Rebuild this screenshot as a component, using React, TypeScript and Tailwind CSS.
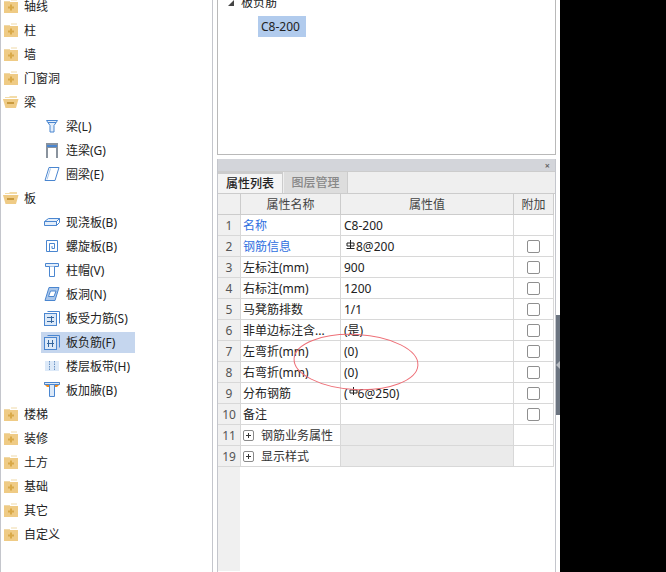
const FONT = "font-['Noto_Sans','Noto_Sans_CJK_SC',sans-serif]";

function Folder({ open }: { open?: boolean }) {
  if (open) {
    return (
      <svg width="16" height="14" viewBox="0 0 16 14" className="ml-[2px] shrink-0">
        <path d="M2 2h4l1-1h7v2H2z" fill="#f3dca8" />
        <path d="M0 4h15.500l-2.500 9H2.500z" fill="#efcb85" />
        <rect x="4" y="7" width="7" height="2" fill="#c99a3e" />
      </svg>
    );
  }
  return (
    <svg width="14" height="14" viewBox="0 0 14 14" className="ml-[3px] shrink-0">
      <rect x="7" y="0.500" width="6" height="1" fill="#f0d9a8" />
      <rect x="0" y="3" width="14" height="11" fill="#efcb85" />
      <rect x="0" y="2" width="6" height="1" fill="#f0d9a8" />
      <path d="M6 5.500h2v2h2v2H8v2H6v-2H4v-2h2z" fill="#d9a948" />
    </svg>
  );
}

const BLUE = "#4a86d0";

function BeamIcon({ name }: { name: string }) {
  const common = { width: 16, height: 16, viewBox: "0 0 16 16", fill: "none", stroke: BLUE, className: "shrink-0" };
  switch (name) {
    case "funnel":
      return (
        <svg {...common}>
          <path d="M2.500 2.500h11l-3.500 5v6.500H6V7.500z" fill="#e4eefa" />
          <path d="M4 4.500h8" />
        </svg>
      );
    case "gate":
      return (
        <svg width="16" height="16" viewBox="0 0 16 16" className="shrink-0">
          <rect x="2" y="1" width="12" height="15" fill="#8a939e" />
          <rect x="3" y="3" width="10" height="2" fill="#4a86d0" />
          <rect x="4" y="6" width="8" height="10" fill="#fff" />
        </svg>
      );
    case "para":
      return (
        <svg {...common}>
          <path d="M5 1.500h10L11 14.500H1z" fill="#fff" />
          <path d="M6.500 2.500l-3.500 11" stroke="#a9c6ea" />
        </svg>
      );
    case "slab":
      return (
        <svg {...common}>
          <path d="M.5 7.500l4-3h11l-3 3v4H.5z" fill="#e4eefa" />
          <path d="M.5 7.500h12l3-3M12.500 7.500v4l3-3v-4" />
        </svg>
      );
    case "spiral":
      return (
        <svg {...common}>
          <path d="M2.500 2.500h11v11h-11z" />
          <path d="M5.500 13V5.500h5v5H8V8" />
        </svg>
      );
    case "cap":
      return (
        <svg {...common}>
          <path d="M1.500 1.500h13v3h-13z" fill="#e4eefa" />
          <path d="M5.500 4.500v10h5v-10" fill="#fff" />
        </svg>
      );
    case "hole":
      return (
        <svg {...common}>
          <path d="M5 1.500h10L11 14.500H1z" fill="#a9c6ea" />
          <path d="M6.500 5h5.500l-2 5.500H4.500z" fill="#fff" />
        </svg>
      );
    case "rebarS":
    case "rebarF":
      return (
        <svg {...common}>
          <path d="M3.500 1.500h12v12" />
          <rect x="0.500" y="3.500" width="12" height="12" fill="#dce9f8" />
          {name === "rebarS" ? (
            <path d="M3 7.500h7M3 11.500h7M7.500 6v7" stroke="#35679f" />
          ) : (
            <path d="M4.500 6v7M8.500 6v7M3 9.500h7" stroke="#35679f" />
          )}
        </svg>
      );
    case "band":
      return (
        <svg width="16" height="16" viewBox="0 0 16 16" className="shrink-0">
          <rect x="1" y="3" width="14" height="10" fill="#dce9f8" />
          <path d="M5.500 3v10M10.500 3v10" stroke="#6b93c4" strokeDasharray="1.500 1" />
        </svg>
      );
    default:
      return (
        <svg width="16" height="16" viewBox="0 0 16 16" className="shrink-0">
          <path d="M0 0h16v2l-3 3H3L0 2z" fill="#f08a1d" />
          <path d="M.5.500h15v2h-15z" fill="#dce9f8" stroke={BLUE} />
          <path d="M5.500 2.500h5v12h-5z" fill="#dce9f8" stroke={BLUE} />
        </svg>
      );
  }
}

function Group({ label, open }: { label: string; open?: boolean }) {
  return (
    <div className="flex h-6 items-center">
      <Folder open={open} />
      <span className={`pt-[2px] ${open ? "ml-[5px]" : "ml-1.5"}`}>{label}</span>
    </div>
  );
}

function Leaf({ icon, label, active }: { icon: string; label: string; active?: boolean }) {
  return (
    <div className="flex h-6 items-center pl-10">
      <div className={`flex h-[21px] items-center pl-[3px] pr-1 ${active ? "w-[94px] bg-[#c5d6ee]" : ""}`}>
        <BeamIcon name={icon} />
        <span className="ml-[6px] whitespace-nowrap pt-[2px]">{label}</span>
      </div>
    </div>
  );
}

function RebarMark({ bar }: { bar?: boolean }) {
  return (
    <svg width="9" height="10" viewBox="0 0 9 10" className={`mb-[3px] shrink-0 ${bar ? "ml-[2px] mr-px" : "ml-px"}`} fill="none" stroke="#222">
      <path d="M4.500 0v8M1 3h7v3H1z" />
      {bar && <path d="M.5 8.500h8" />}
    </svg>
  );
}

function CheckBox() {
  return <div className="h-[13px] w-[13px] rounded-[2px] border border-[#8f8f8f] bg-white" />;
}

const rows = [
  { no: "1", name: "名称", value: "C8-200", link: true, noCheck: true },
  { no: "2", name: "钢筋信息", value: "8@200", link: true, mark: "bar" },
  { no: "3", name: "左标注(mm)", value: "900" },
  { no: "4", name: "右标注(mm)", value: "1200" },
  { no: "5", name: "马凳筋排数", value: "1/1" },
  { no: "6", name: "非单边标注含...", value: "(是)" },
  { no: "7", name: "左弯折(mm)", value: "(0)" },
  { no: "8", name: "右弯折(mm)", value: "(0)" },
  { no: "9", name: "分布钢筋", value: "6@250)", mark: "plain" },
  { no: "10", name: "备注", value: "" },
];

function PlusBox() {
  return (
    <svg width="11" height="11" viewBox="0 0 11 11" className="ml-[2px] shrink-0" fill="none">
      <rect x="0.500" y="0.500" width="10" height="10" rx="1.500" stroke="#8a8a8a" />
      <path d="M3 5.500h5M5.500 3v5" stroke="#333" />
    </svg>
  );
}

export default function App() {
  return (
    <div className={`${FONT} relative flex h-[572px] w-[666px] overflow-hidden bg-white text-[12px] leading-none text-[#222]`}>
      {/* left tree */}
      <div className="h-full w-[213px] shrink-0 border-x border-[#c4c6cc]">
        <div className="-mt-1.5">
          <Group label="轴线" />
          <Group label="柱" />
          <Group label="墙" />
          <Group label="门窗洞" />
          <Group label="梁" open />
          <Leaf icon="funnel" label="梁(L)" />
          <Leaf icon="gate" label="连梁(G)" />
          <Leaf icon="para" label="圈梁(E)" />
          <Group label="板" open />
          <Leaf icon="slab" label="现浇板(B)" />
          <Leaf icon="spiral" label="螺旋板(B)" />
          <Leaf icon="cap" label="柱帽(V)" />
          <Leaf icon="hole" label="板洞(N)" />
          <Leaf icon="rebarS" label="板受力筋(S)" />
          <Leaf icon="rebarF" label="板负筋(F)" active />
          <Leaf icon="band" label="楼层板带(H)" />
          <Leaf icon="haunch" label="板加腋(B)" />
          <Group label="楼梯" />
          <Group label="装修" />
          <Group label="土方" />
          <Group label="基础" />
          <Group label="其它" />
          <Group label="自定义" />
        </div>
      </div>

      {/* right column */}
      <div className="flex h-full w-[343px] shrink-0 flex-col pl-1">
        <div className="h-[155px] shrink-0 border-x border-b border-[#b9b9b9]">
          <div className="-mt-[3px] flex h-3 items-center pl-[10px]">
            <div className="h-0 w-0 border-b-[6px] border-l-[6px] border-b-[#444] border-l-transparent" />
            <span className="ml-[7px]">板负筋</span>
          </div>
          <div className="mt-[7px] ml-10 flex h-[21px] w-12 items-center bg-[#b1cbed] pl-[3px] pt-px">C8-200</div>
        </div>

        <div className="mt-1 flex min-h-0 flex-1 flex-col border-x border-[#c4c6cc]">
          <div className="flex h-3 shrink-0 items-center justify-end bg-[#d3d5da] pr-[5px] text-[9px] font-bold text-[#666]">×</div>
          <div className="flex h-[23px] shrink-0 items-end border-y border-[#cccccc] bg-[#efefef]">
            <div className="flex h-[21px] w-[65px] items-center justify-center border-r border-t-2 border-[#cccccc] bg-[#f4f4f4] font-medium">属性列表</div>
            <div className="ml-px flex h-[21px] w-[64px] items-center justify-center border-r border-[#cccccc] bg-[#dddddd] pt-px font-medium text-[#888]">图层管理</div>
          </div>

          <div className="flex min-h-0 flex-1">
            <div className="w-[336px] shrink-0">
              <div className="flex h-[21px] border-b border-[#cccccc] bg-[#f0f0f0] text-[#444]">
                <div className="w-[23px] shrink-0 border-r border-[#cccccc]" />
                <div className="flex w-[100px] shrink-0 items-center justify-center border-r border-[#cccccc] pt-px">属性名称</div>
                <div className="flex w-[173px] shrink-0 items-center justify-center border-r border-[#cccccc] pt-px">属性值</div>
                <div className="flex w-10 shrink-0 items-center justify-center border-r border-[#cccccc] pt-px">附加</div>
              </div>

              {rows.map((r) => (
                <div key={r.no} className="flex h-[21px] border-b border-[#d8d8d8]">
                  <div className="flex w-[23px] shrink-0 items-center justify-center border-r border-[#d8d8d8] bg-[#f0f0f0] pt-px text-[#555]">{r.no}</div>
                  <div className={`flex w-[100px] shrink-0 items-center overflow-hidden whitespace-nowrap border-r border-[#d8d8d8] pl-[2px] pt-px ${r.link ? "text-[#2f6fe0]" : ""}`}>{r.name}</div>
                  <div className="flex w-[173px] shrink-0 items-center border-r border-[#d8d8d8] pl-[3px] pt-px">
                    {r.mark === "plain" && <span>(</span>}
                    {r.mark && <RebarMark bar={r.mark === "bar"} />}
                    <span>{r.value}</span>
                  </div>
                  <div className="flex w-10 shrink-0 items-center justify-center border-r border-[#d8d8d8]">{!r.noCheck && <CheckBox />}</div>
                </div>
              ))}

              {[
                { no: "11", name: "钢筋业务属性" },
                { no: "19", name: "显示样式" },
              ].map((g) => (
                <div key={g.no} className="flex h-[21px] border-b border-[#d8d8d8]">
                  <div className="flex w-[23px] shrink-0 items-center justify-center border-r border-[#d8d8d8] bg-[#f0f0f0] pt-px text-[#555]">{g.no}</div>
                  <div className="flex w-[100px] shrink-0 items-center border-r border-[#d8d8d8] text-[#333]">
                    <PlusBox />
                    <span className="ml-[7px] pt-px">{g.name}</span>
                  </div>
                  <div className="w-[173px] shrink-0 border-r border-[#d8d8d8] bg-[#ebebeb]" />
                  <div className="w-10 shrink-0 border-r border-[#d8d8d8]" />
                </div>
              ))}

              <div className="h-[104px] w-[22px] bg-[#f0f0f0]" />
            </div>
          </div>
        </div>
      </div>

      {/* splitter handle, then the black area */}
      <div className="h-full w-1 shrink-0 pt-[315px]">
        <div className="flex h-[100px] w-1 items-center bg-[#6b7480]">
          <div className="h-0 w-0 border-y-[4px] border-r-[4px] border-y-transparent border-r-[#b8bcc2]" />
        </div>
      </div>
      <div className="h-full flex-1 bg-black" />

      {/* hand-drawn mark over the table */}
      <svg width="666" height="572" className="pointer-events-none absolute left-0 top-0" fill="none">
        <ellipse cx="356" cy="362" rx="62" ry="27.500" transform="rotate(3 356 362)" stroke="#ee7078" strokeWidth="1" />
      </svg>
    </div>
  );
}
